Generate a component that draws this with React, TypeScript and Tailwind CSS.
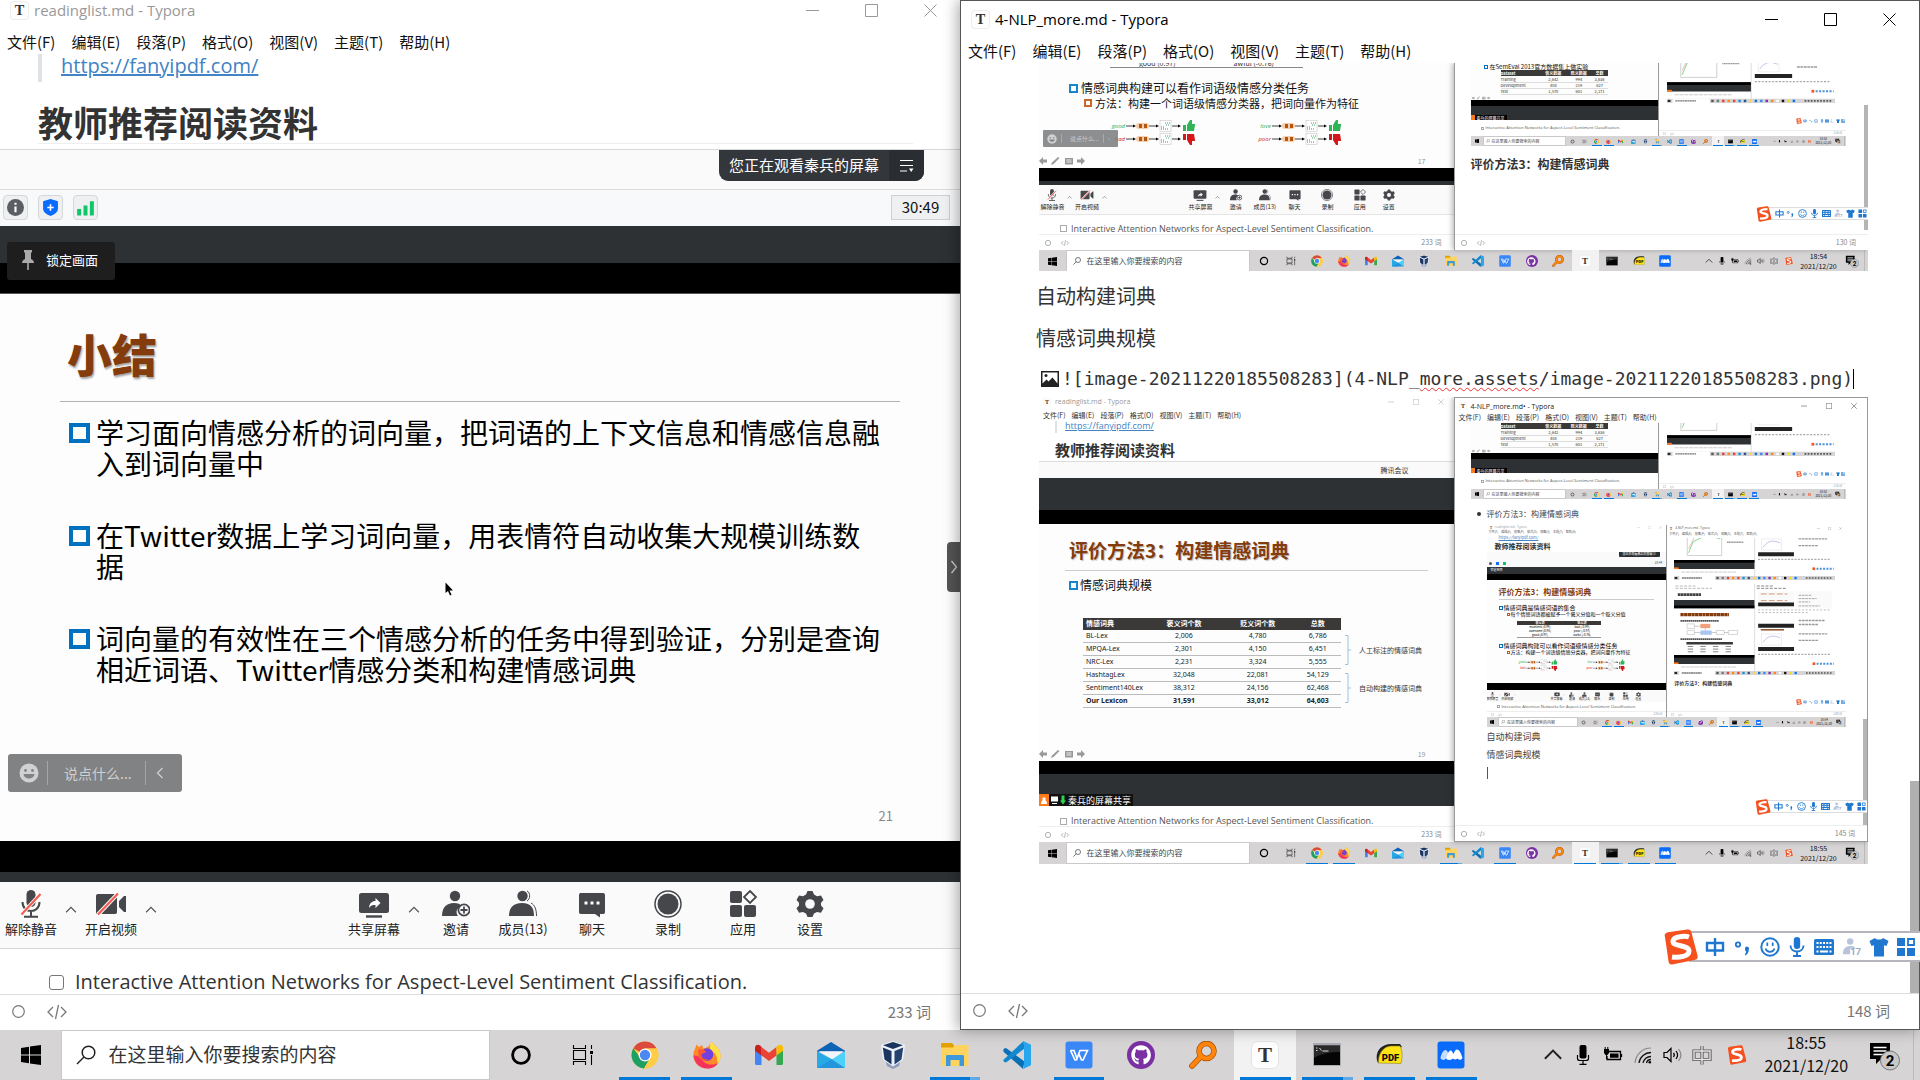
import React from "react";
import { FaGithub } from "react-icons/fa";

type Size = "lg" | "md" | "sm";

const svg = "block h-full w-full";

/* ---------- application logos ---------- */

const Windows = () => (
  <svg viewBox="0 0 20 20" className={svg}>
    <path d="M0 3l8-1.2v7.7H0zM9 1.6L20 0v9.5H9zM0 10.5h8v7.7L0 17zM9 10.5h11V20L9 18.4z" fill="#000" />
  </svg>
);
const Cortana = () => (
  <svg viewBox="0 0 28 28" className={svg}>
    <circle cx="14" cy="14" r="8.4" fill="none" stroke="#000" strokeWidth="2.8" />
  </svg>
);
const TaskView = () => (
  <svg viewBox="0 0 28 28" className={svg}>
    <path d="M4.500 4v3.500h12V4M4.500 24v-3.500h12V24M4.500 9.500h12v9h-12zM22.500 4v4M22.500 14v10" fill="none" stroke="#000" strokeWidth="1.100" />
    <rect x="21" y="10" width="3" height="3" fill="#000" />
  </svg>
);
const Chrome = () => (
  <svg viewBox="0 0 28 28" className={svg}>
    <circle cx="14" cy="14" r="13.500" fill="#ffcd46" />
    <path d="M14 14L2.300 7.200A13.500 13.500 0 0 1 25.700 7.500H14z" fill="#db4a3d" />
    <path d="M2.300 7.200A13.500 13.500 0 0 0 13 27.500l6-10.500-5-3-4.500 3z" fill="#1da061" />
    <path d="M14 7.500h11.700A13.500 13.500 0 0 1 13 27.500l6.500-11z" fill="#ffcd46" />
    <circle cx="14" cy="14" r="6.500" fill="#fff" />
    <circle cx="14" cy="14" r="5.200" fill="#4d88f2" />
  </svg>
);
const Firefox = () => (
  <svg viewBox="0 0 28 28" className={svg}>
    <path d="M18.500 0c1 3 3 3.500 5 5.500 5 5.500 5.500 12 1 17.500-5.500 6-15.500 6-21 0C-.5 18.500-.5 11.500 2 8l1.500-4.500L6 6l3-2 1.500 3.500c3-.5 7-2.500 8-7.500z" fill="#ff8a2a" />
    <path d="M18.500 0c1 3 3 3.500 5 5.500 5 5.500 5.500 12 1 17.500 0-7-1.500-11-7-14-1.500-3 0-6.500 1-9z" fill="#ffe04a" />
    <path d="M.5 15C2 23.500 8 27.500 14.500 27.500c4.500 0 8-1.500 10.500-5.500-4 2-10 2.500-14-1-3.500-3-6-8-10.500-6z" fill="#f5335f" />
    <circle cx="14" cy="13.500" r="6.300" fill="#7340dd" />
    <path d="M5 9c3-1.500 6-.5 8 1.500-1 2-4 1.500-4.500 3.500 0 3.500 4 5 7 4-4 3.500-9.500 1-10-3z" fill="#ff5a2f" />
  </svg>
);
const Gmail = () => (
  <svg viewBox="0 0 28 28" className={svg}>
    <path d="M0 7v15.500C0 23.800 1 24 2 24h4.500V11z" fill="#4285f4" />
    <path d="M28 7v15.500c0 1.300-1 1.500-2 1.500h-4.500V11z" fill="#34a853" />
    <path d="M6.500 6v8.500L14 20l7.500-5.500V6L14 11.800z" fill="#ea4335" />
    <path d="M0 7c0-3 3-4 5-2.500l1.500 1.200v8.800L0 9.700z" fill="#c5221f" />
    <path d="M28 7c0-3-3-4-5-2.500l-1.500 1.200v8.800L28 9.700z" fill="#fbbc04" />
  </svg>
);
const Mail = () => (
  <svg viewBox="0 0 30 28" className={svg}>
    <path d="M0 9.500L15 0l15 9.500v1H0z" fill="#0f63b4" />
    <path d="M2 10h26L17 19z" fill="#f3f6f9" />
    <path d="M0 10l16 8.500V28H0z" fill="#27a9e8" />
    <path d="M30 10L16 18.500 30 28z" fill="#4bd2fb" />
    <path d="M0 28l16-9.500L30 28z" fill="#2296dd" />
  </svg>
);
const VBox = () => (
  <svg viewBox="0 0 28 28" className={svg}>
    <path d="M6 18l8-2 8 2-2 7-6 3-6-3z" fill="#8f9dbb" />
    <path d="M14 0l12 4-2 15-10 6.500L4 19 2 4z" fill="#eef3fa" />
    <path d="M14 1l10 3.200L14 8 4 4.200z" fill="#1b355f" />
    <path d="M3.800 6.500L12.500 10v13.500L5.500 18.500z" fill="#1b355f" />
    <path d="M24.200 6.500L15.500 10v13.500l7-5z" fill="#24426f" />
  </svg>
);
const Folder = () => (
  <svg viewBox="0 0 28 28" className={svg}>
    <path d="M0 3.500C0 2.500.5 2 1.500 2H11l2 2.500V7H0z" fill="#e2a100" />
    <path d="M0 6.500h12l2-2.500h13.500v21H0z" fill="#ffd45e" />
    <path d="M5 25v-9.500c0-1 .5-1.500 1.500-1.500h15c1 0 1.500.5 1.500 1.500V25h-4.500v-6h-9v6z" fill="#3e98dc" />
  </svg>
);
const VSCode = () => (
  <svg viewBox="0 0 30 30" className={svg}>
    <path d="M2 7.500L4 8l19 14-1.500 8L.5 11.500V9z" fill="#0a6fb5" />
    <path d="M.5 20L22 0l1 8L4 22.500l-2 .5-1.500-1.500z" fill="#1289cf" />
    <path d="M21.500 0L30 4v22l-8.500 4 1-2V2z" fill="#29a7ee" />
  </svg>
);
const Wps = () => (
  <svg viewBox="0 0 28 28" className={svg}>
    <rect x=".5" y=".5" width="27" height="27" rx="3" fill="#3a88f8" />
    <path d="M5.500 9.500h3.500l3 8 3-8h7.500l-4.500 9.500h-1.500L13.500 12M5.500 9.500L10 19h1.500" fill="none" stroke="#fff" strokeWidth="1.700" />
  </svg>
);
const Github = () => (
  <div className="h-full w-full rounded-full bg-[#7a2fa2] p-[14%] text-white">
    <FaGithub className={svg} />
  </div>
);
const Everything = () => (
  <svg viewBox="0 0 28 28" className={svg}>
    <circle cx="17.500" cy="10" r="7.500" fill="none" stroke="#a85000" strokeWidth="5.600" />
    <path d="M11.500 16L3 25" stroke="#a85000" strokeWidth="5.600" strokeLinecap="round" />
    <circle cx="17.500" cy="10" r="7.500" fill="none" stroke="#ff850d" strokeWidth="4.200" />
    <path d="M11.500 16L3 25" stroke="#ff850d" strokeWidth="4.200" strokeLinecap="round" />
  </svg>
);
const Typora = () => (
  <svg viewBox="0 0 28 28" className={svg}>
    <rect x=".5" y=".5" width="27" height="27" rx="6" fill="#fdfdfd" stroke="#e2e2e2" />
    <text x="14" y="21" textAnchor="middle" fontSize="21" fontWeight="700" fill="#333" className="font-['Liberation_Serif',serif]">
      T
    </text>
  </svg>
);
const Cmd = () => (
  <svg viewBox="0 0 28 28" className={svg}>
    <path d="M0 2h28v23H0z" fill="#a9acb0" />
    <path d="M1 4.500h26V24H1z" fill="#050505" />
    <path d="M1 17C9 12 18 11 27 11V4.500H1z" fill="#3a3a3a" opacity=".7" />
    <path d="M3 7h1.500M3 9.500h1.500M6.500 7l2 2.500M9.500 10h6" stroke="#ddd" strokeWidth="1" />
  </svg>
);
const Pdf = () => (
  <svg viewBox="0 0 28 28" className={svg}>
    <path d="M3 22C-1 14 4 3 16 3h9l2 3-14 3z" fill="#222" />
    <path d="M3.500 22C3 13 8 5.500 16 5h9c2.500 5 2.500 11 1 17.500z" fill="#ffe312" stroke="#8a8220" strokeWidth=".6" />
    <text x="15.500" y="19.500" textAnchor="middle" fontSize="9.500" fontWeight="900" fill="#111" className="font-['Roboto',sans-serif]">
      PDF
    </text>
  </svg>
);
const Meeting = () => (
  <svg viewBox="0 0 28 28" className={svg}>
    <rect x=".5" y=".5" width="27" height="27" rx="3" fill="#0a6cfb" />
    <path d="M3.500 17c1-5 3-8 5-8 2 0 3 4 4.500 8-1 2.500-3 2-4 .500-1.500 2-4.500 2-5.500-.500z" fill="#c7dcff" />
    <path d="M9.500 17c1-5 2.500-7.500 4-7.500 1.500 0 2 2 3 3.500 1-2.500 2-4.500 3.500-4.500 2.500 0 4.500 5 5.500 8.500-1.500 2.500-3.500 2-5 .500-2 1.500-3.500 1-4.500 0-2 2-5 2-6.500-.500z" fill="#fff" />
  </svg>
);
const Sogou = () => (
  <svg viewBox="0 0 36 36" className={svg}>
    <path d="M2 8C1 5 3 3.800 5 3.300L24 .6c3-.5 4 .5 4.500 3l6 23c.6 3-.5 4-3 4.500L10 35.300c-3 .6-4-.4-4.500-3z" fill="#f4511e" />
    <path d="M26 8c-4-1.500-16-.5-16 4.500 0 5.500 16 3 16 9.500 0 5.500-10 7-17 6" fill="none" stroke="#fff" strokeWidth="5" />
  </svg>
);

/* ---------- tray and input-method glyphs ---------- */

const ChevronUp = ({ color = "#222" }: { color?: string }) => (
  <svg viewBox="0 0 16 16" className={svg}>
    <path d="M1.500 11L8 4.500l6.500 6.500" fill="none" stroke={color} strokeWidth="1.600" />
  </svg>
);
const TrayMic = () => (
  <svg viewBox="0 0 20 20" className={svg}>
    <rect x="6.500" y="0" width="7" height="13.500" rx="2" />
    <path d="M4.500 10v3.500c0 1.500 1 2 2.500 2h6c1.500 0 2.500-.5 2.500-2V10M10 16v3M6.500 19.400h7" fill="none" stroke="#000" strokeWidth="1.200" />
  </svg>
);
const Battery = () => (
  <svg viewBox="0 0 20 20" className={svg}>
    <path d="M5 6.500h12.500v8H4V11M18.500 9v3" fill="none" stroke="#000" strokeWidth="1.300" />
    <path d="M7 8.500h8.500v4.200H7zM1 4h5v4L4.500 10h-2L1 8z" />
    <path d="M2.200 2v2M4.800 2v2M3.500 10v4" stroke="#000" strokeWidth="1" />
  </svg>
);
const Wifi = () => (
  <svg viewBox="0 0 20 20" className={svg}>
    <path d="M2 18A16 16 0 0 1 18 3" fill="none" stroke="#888" strokeWidth="1.200" />
    <path d="M6 18A12 12 0 0 1 18 7.500M10 18a8 8 0 0 1 8-6.500M13.500 18a4.500 4.500 0 0 1 4.500-3.500" fill="none" stroke="#111" strokeWidth="1.300" />
    <circle cx="16.800" cy="17.300" r="1.300" />
  </svg>
);
const Sound = () => (
  <svg viewBox="0 0 20 20" className={svg}>
    <path d="M1 7.500h3L8 3.500v13l-4-4H1z" fill="none" stroke="#000" strokeWidth="1.200" />
    <path d="M10.500 8c1 1.200 1 2.800 0 4M13 6c2 2.500 2 5.500 0 8" fill="none" stroke="#000" strokeWidth="1.200" />
    <path d="M15.500 4c3.200 4 3.200 8 0 12" fill="none" stroke="#888" strokeWidth="1.200" />
  </svg>
);
const Zhong = () => (
  <svg viewBox="0 0 20 20" className={svg}>
    <path d="M2 6h16v7.500H2zM10 1v18" fill="none" stroke="#1f77cf" strokeWidth="2.400" />
  </svg>
);
const TrayZhong = () => (
  <svg viewBox="0 0 20 20" className={svg}>
    <path d="M2 6h16v8.500H2zM10 1v18.500" fill="none" stroke="#555" strokeWidth="3.200" />
    <path d="M2 6h16v8.500H2zM10 1v18.500" fill="none" stroke="#e8e6e6" strokeWidth="1.400" />
  </svg>
);
const Notification = () => (
  <svg viewBox="0 0 32 32" className={svg}>
    <path d="M2 4h20v16h-9l-5 5v-5H2z" />
    <path d="M5.500 8.500h13M5.500 12h13M5.500 15.500h13" stroke="#fff" strokeWidth="1.500" />
    <circle cx="22" cy="21.500" r="9.500" fill="#c9c8c8" stroke="#777" />
    <text x="22" y="27" textAnchor="middle" fontSize="15" fontWeight="700" className="font-['Roboto',sans-serif]">
      2
    </text>
  </svg>
);
const Punct = () => (
  <svg viewBox="0 0 20 20" className={svg}>
    <circle cx="5" cy="7.500" r="2.200" fill="none" stroke="#1f77cf" strokeWidth="1.800" />
    <path d="M12 11.500a2 2 0 1 1 3.800 1c0 2.500-1 4.500-3.300 6l-.8-1c1-1 1.500-2 1.500-3-.8 0-1.200-1-1.200-3z" fill="#1f77cf" />
  </svg>
);
const Smile = () => (
  <svg viewBox="0 0 20 20" className={svg}>
    <circle cx="10" cy="10" r="8.700" fill="none" stroke="#1f77cf" strokeWidth="2" />
    <path d="M7.300 5.500v3.500M12.700 5.500v3.500M5.500 11.500c1.500 4.500 7.500 4.500 9 0" fill="none" stroke="#1f77cf" strokeWidth="1.700" />
  </svg>
);
const ImeMic = () => (
  <svg viewBox="0 0 20 20" className={svg}>
    <rect x="6.800" y="0" width="6.400" height="12" rx="3.200" fill="#1f77cf" />
    <path d="M3.500 8.500c0 8 13 8 13 0M10 14.500V19M6 19h8" fill="none" stroke="#1f77cf" strokeWidth="1.900" />
  </svg>
);
const Keyboard = () => (
  <svg viewBox="0 0 20 20" className={svg}>
    <rect x="0" y="2" width="20" height="16" rx="1.500" fill="#1f77cf" />
    <path d="M2.500 6h15M2.500 10h15" stroke="#fff" strokeWidth="2.200" strokeDasharray="2 1.250" />
    <path d="M2.500 14.500h2M6 14.500h8M15.500 14.500h2" stroke="#fff" strokeWidth="2" />
  </svg>
);
const Person17 = () => (
  <svg viewBox="0 0 22 20" className={svg}>
    <circle cx="9" cy="4" r="3.500" fill="#b9c4dc" />
    <path d="M1 18c0-6 3-9 8-9s5 1 6 3H9v6z" fill="#b9c4dc" />
    <text x="15" y="19" textAnchor="middle" fontSize="10" fontWeight="700" fill="#9aa8c6" className="font-['Roboto',sans-serif]">
      17
    </text>
  </svg>
);
const Shirt = () => (
  <svg viewBox="0 0 20 20" className={svg}>
    <path d="M6 1c1 2 7 2 8 0l5.500 3-2 5-2.500-.8V19.500H5V8.200L2.500 9 .5 4z" fill="#1f77cf" />
  </svg>
);
const GridIcon = () => (
  <svg viewBox="0 0 20 20" className={svg}>
    <path d="M1 1h8v8H1zM1 11h8v8H1zM11 11h8v8h-8z" fill="#1f77cf" />
    <path d="M12 2h6v6h-6z" fill="none" stroke="#1f77cf" strokeWidth="1.800" />
  </svg>
);

/* ---------- meeting glyphs ---------- */

const ink = "#45474b";
const MicOff = () => (
  <svg viewBox="0 0 28 28" className={svg}>
    <rect x="9.500" y="0" width="9" height="17" rx="4.500" fill={ink} />
    <path d="M5.500 12c0 12 17 12 17 0M14 21v5M7 26.800h14" fill="none" stroke={ink} strokeWidth="2" />
    <path d="M4.500 24.500L23.500 4" stroke="#fff" strokeWidth="4" />
    <path d="M4.500 24.500L23.500 4" stroke="#f25c54" strokeWidth="2.200" />
  </svg>
);
const CamOff = () => (
  <svg viewBox="0 0 32 28" className={svg}>
    <path d="M1 6c0-1 .5-2 2-2h17c1.500 0 2 1 2 2v16c0 1-.5 2-2 2H3c-1.500 0-2-1-2-2zM24 11l5-5h2v16h-2l-5-5z" fill={ink} />
    <path d="M3 24.500L23 3.500" stroke="#fff" strokeWidth="4" />
    <path d="M3 24.500L23 3.500" stroke="#f25c54" strokeWidth="2.200" />
  </svg>
);
const Share = () => (
  <svg viewBox="0 0 32 28" className={svg}>
    <rect x="1" y="3" width="30" height="20" rx="2.500" fill={ink} />
    <path d="M8 26.500h16" stroke={ink} strokeWidth="2.400" />
    <path d="M11 18c.5-5 3-7 6.500-7V8l5 5-5 5v-3c-3 0-5 .5-6.500 3z" fill="#fff" />
  </svg>
);
const Invite = () => (
  <svg viewBox="0 0 28 28" className={svg}>
    <circle cx="13" cy="6" r="5.200" fill={ink} />
    <path d="M0 26c0-8 4-13 12-13 4 0 6 1 8 3-5 1-7 6-4 10z" fill={ink} />
    <circle cx="22" cy="20" r="5.600" fill="#fafafa" stroke={ink} strokeWidth="1.800" />
    <path d="M22 16.500v7M18.500 20h7" stroke={ink} strokeWidth="1.800" />
  </svg>
);
const Members = () => (
  <svg viewBox="0 0 28 28" className={svg}>
    <circle cx="13.500" cy="6" r="5.200" fill={ink} />
    <path d="M0 26c0-8 4-13 13-13s12 5 12 13z" fill={ink} />
    <path d="M18 1c3.500 1.500 3.500 8 0 10M22 13c4 2 5.500 7 5.500 13" fill="none" stroke={ink} strokeWidth="1" />
  </svg>
);
const Chat = () => (
  <svg viewBox="0 0 28 28" className={svg}>
    <path d="M1 5c0-1.500 1-2 2-2h22c1.500 0 2 1 2 2v17c0 1.500-1 2-2 2h-3v3.500L17 24H3c-1.500 0-2-1-2-2z" fill={ink} />
    <path d="M6.500 11.500h3v3h-3zM12.500 11.500h3v3h-3zM18.500 11.500h3v3h-3z" fill="#fff" />
  </svg>
);
const RecordIcon = () => (
  <svg viewBox="0 0 28 28" className={svg}>
    <circle cx="14" cy="14" r="13" fill="none" stroke={ink} strokeWidth="1.500" />
    <circle cx="14" cy="14" r="10.500" fill={ink} />
  </svg>
);
const Apps = () => (
  <svg viewBox="0 0 28 28" className={svg}>
    <rect x="1" y="1" width="12" height="12" rx="2" fill={ink} />
    <rect x="1" y="15" width="12" height="12" rx="2" fill={ink} />
    <rect x="15" y="15" width="12" height="12" rx="2" fill={ink} />
    <path d="M21 1l6 6-6 6-6-6z" fill="none" stroke={ink} strokeWidth="1.800" />
  </svg>
);
const Gear = () => (
  <svg viewBox="0 0 28 28" className={svg}>
    <path d="M10 4.500L11.500 1h5L18 4.500l3 1.800 4-.8 2.500 4.500-2.500 2.800v2.600l2.500 2.800-2.500 4.500-4-.8-3 1.700-1.500 3.400h-5L10 23.600l-3-1.700-4 .8L.5 18.200 3 15.400v-2.600L.5 10 3 5.500l4 .8z" fill={ink} />
    <circle cx="14" cy="14" r="4.800" fill="#fafafa" />
  </svg>
);
const Grin = () => (
  <svg viewBox="0 0 20 20" className={svg}>
    <circle cx="10" cy="10" r="9.500" fill="#d0d1d2" />
    <circle cx="6.500" cy="7.500" r="1.400" fill="#808284" />
    <circle cx="13.500" cy="7.500" r="1.400" fill="#808284" />
    <path d="M4.500 11h11c-.5 6-10.500 6-11 0z" fill="#808284" />
  </svg>
);

/* ---------- shared bars ---------- */

const apps: { name: string; icon: React.ReactNode; open?: boolean; active?: boolean; stacked?: boolean }[] = [
  { name: "Cortana", icon: <Cortana /> },
  { name: "任务视图", icon: <TaskView /> },
  { name: "Chrome", icon: <Chrome />, open: true },
  { name: "Firefox", icon: <Firefox />, open: true },
  { name: "Gmail", icon: <Gmail /> },
  { name: "邮件", icon: <Mail /> },
  { name: "VirtualBox", icon: <VBox /> },
  { name: "文件资源管理器", icon: <Folder />, open: true, stacked: true },
  { name: "VS Code", icon: <VSCode /> },
  { name: "WPS", icon: <Wps />, open: true },
  { name: "GitHub", icon: <Github /> },
  { name: "Everything", icon: <Everything /> },
  { name: "Typora", icon: <Typora />, open: true, active: true },
  { name: "命令提示符", icon: <Cmd />, open: true, stacked: true },
  { name: "PDF", icon: <Pdf />, open: true },
  { name: "腾讯会议", icon: <Meeting />, open: true },
];

const bar = {
  lg: { h: "h-[50px]", start: "size-5", find: "h-5 w-5 ml-3.5", text: "text-[19px] ml-3", icon: "size-7", line: "h-[3px]", tray: "size-5", logo: "size-5", clock: "text-[16px] leading-[23px] pb-0.5", bell: "size-8" },
  md: { h: "h-[22px]", start: "size-[9px]", find: "h-2 w-2 ml-1.5", text: "text-[8px] ml-1.5", icon: "size-3", line: "h-px", tray: "size-2", logo: "size-2", clock: "text-[7px] leading-[10px]", bell: "size-3.5" },
  sm: { h: "h-[10px]", start: "size-1", find: "h-1 w-1 ml-0.5", text: "text-[4px] ml-0.5", icon: "size-[5px]", line: "h-px", tray: "size-[3px]", logo: "size-[3px]", clock: "text-[3px] leading-[4px]", bell: "size-1.5" },
};

function Taskbar({ size, time, date = "2021/12/20" }: { size: Size; time: string; date?: string }) {
  const b = bar[size];
  return (
    <footer className={`flex w-full shrink-0 overflow-hidden bg-[#d6d4d5] text-[#111] ${b.h}`}>
      <button aria-label="开始" className="flex w-[3.2%] items-center justify-center">
        <span className={b.start}>
          <Windows />
        </span>
      </button>
      <label className="flex w-[22.3%] items-center border border-[#c9c9c9] bg-white">
        <span className={`shrink-0 ${b.find}`}>
          <svg viewBox="0 0 20 20" className={svg}>
            <circle cx="12.500" cy="7.500" r="6.300" fill="none" stroke="#222" strokeWidth="1.500" />
            <path d="M8 12l-7 7" stroke="#222" strokeWidth="1.500" />
          </svg>
        </span>
        {size === "lg" ? (
          <input aria-label="搜索" placeholder="在这里输入你要搜索的内容" className={`min-w-0 flex-1 bg-transparent pb-0.5 outline-none placeholder:text-[#333] ${b.text}`} />
        ) : (
          <span className={`whitespace-nowrap leading-none text-[#444] ${b.text}`}>在这里输入你要搜索的内容</span>
        )}
      </label>
      <nav className="flex w-[51.7%]">
        {apps.map((a) => (
          <button key={a.name} aria-label={a.name} className={`relative flex flex-1 items-center justify-center ${a.active ? "bg-[#f3f2f2]" : ""}`}>
            <span className={b.icon}>{a.icon}</span>
            {a.open && <span className={`absolute bottom-0 left-[9%] right-[9%] bg-[#0078d7] ${b.line}`} />}
            {a.stacked && <span className={`absolute bottom-0 right-[9%] w-[16%] bg-[#5fa9e6] ${b.line}`} />}
          </button>
        ))}
      </nav>
      <div className="ml-auto flex w-[19.9%] items-stretch">
        {[<ChevronUp />, <TrayMic />, <Battery />, <Wifi />, <Sound />, <TrayZhong />].map((icon, i) => (
          <span key={i} className="flex flex-[30] items-center justify-center">
            <span className={b.tray}>{icon}</span>
          </span>
        ))}
        <span className="flex flex-[40] items-center justify-center">
          <span className={b.logo}>
            <Sogou />
          </span>
        </span>
        <span className={`flex w-0 flex-[98] flex-col items-center justify-center whitespace-nowrap ${b.clock}`}>
          <span>{time}</span>
          <span>{date}</span>
        </span>
        <span className="flex flex-[58] items-center justify-center">
          <span className={`shrink-0 ${b.bell}`}>
            <Notification />
          </span>
        </span>
        <span className="flex-[6] border-l border-[#bbb]" />
      </div>
    </footer>
  );
}

const menuItems = ["文件(F)", "编辑(E)", "段落(P)", "格式(O)", "视图(V)", "主题(T)", "帮助(H)"];
const menu = {
  lg: "gap-4 pl-[7px] h-[22px] pb-[3px] text-[15px] text-[#111]",
  md: "gap-[6px] px-1 h-[9px] pb-0.5 text-[7px] text-[#333]",
  sm: "gap-[3px] px-0.5 h-1 text-[3px] text-[#555]",
};
function Menu({ size }: { size: Size }) {
  return (
    <nav className={`flex shrink-0 items-center whitespace-nowrap leading-none ${menu[size]}`}>
      {menuItems.map((m) => (
        <button key={m}>{m}</button>
      ))}
    </nav>
  );
}

const title = {
  lg: { box: "pl-2.5 text-[15px]", icon: "size-[19px] mr-[5px]", ctl: "gap-[46px] pr-[23px]", g: "size-[13px]" },
  md: { box: "pl-1 text-[7px]", icon: "size-2 mr-1", ctl: "gap-[19px] pr-2.5", g: "size-1.5" },
  sm: { box: "pl-0.5 text-[3px]", icon: "size-1 mr-0.5", ctl: "gap-2 pr-1", g: "size-[3px]" },
};
function TitleBar({ size, text, className }: { size: Size; text: string; className: string }) {
  const t = title[size];
  return (
    <header className={`flex shrink-0 items-center ${t.box} ${className}`}>
      <span className={t.icon}>
        <Typora />
      </span>
      <span className={`flex-1 whitespace-nowrap leading-none ${openSans}`}>{text}</span>
      <span className={`flex items-center ${t.ctl}`}>
        {["M0 6.500h13", "M.5 .5h12v12H.5z", "M.5 .5l12 12M12.500 .5l-12 12"].map((d, i) => (
          <button key={d} aria-label={["最小化", "最大化", "关闭"][i]} className={t.g}>
            <svg viewBox="0 0 13 13" className={svg}>
              <path d={d} fill="none" stroke="currentColor" />
            </svg>
          </button>
        ))}
      </span>
    </header>
  );
}

const status = {
  lg: { box: "h-9 border-t border-[#ddd] pb-0.5 pl-3 pr-[29px] text-[15px] text-[#777]", a: "size-[13px]", b: "ml-[22px] h-4 w-5" },
  md: { box: "h-4 border-t border-[#eee] pl-1.5 pr-3 text-[7px] text-[#888]", a: "size-1.5", b: "ml-2.5 size-2" },
  sm: { box: "h-1.5 border-t border-[#eee] pl-1 pr-1 text-[3px] text-[#999]", a: "size-[3px]", b: "ml-1 size-1" },
};
function StatusBar({ size, words }: { size: Size; words: string }) {
  const s = status[size];
  return (
    <div className={`flex shrink-0 items-center bg-white leading-none ${s.box}`}>
      <span className={s.a}>
        <svg viewBox="0 0 13 13" className={svg}>
          <circle cx="6.500" cy="6.500" r="5.800" fill="none" stroke="#777" strokeWidth="1.200" />
        </svg>
      </span>
      <span className={s.b}>
        <svg viewBox="0 0 20 16" className={svg}>
          <path d="M6 3L1 8l5 5M14 3l5 5-5 5M11.500 1l-3 14" fill="none" stroke="#777" strokeWidth="1.300" />
        </svg>
      </span>
      <span className="ml-auto whitespace-nowrap">{words} 词</span>
    </div>
  );
}

const ime = {
  lg: { box: "h-[31px] w-[257px]", logo: "size-9 -my-1", icon: "size-5", edge: "border-y-2 border-[#b5b5bd]" },
  md: { box: "h-[13px] w-[112px]", logo: "size-4 -my-0.5", icon: "size-[9px]", edge: "border-y border-[#ddd]" },
  sm: { box: "h-1.5 w-[50px]", logo: "size-1.5", icon: "size-1", edge: "" },
};
function ImeBar({ size, className }: { size: Size; className: string }) {
  const m = ime[size];
  return (
    <div className={`absolute z-10 flex items-center ${m.box} ${className}`}>
      <span className={`relative z-10 shrink-0 ${m.logo}`}>
        <Sogou />
      </span>
      <div className={`-ml-[4%] flex h-full flex-1 items-center justify-around bg-white pl-[5%] ${m.edge}`}>
        {[<Zhong />, <Punct />, <Smile />, <ImeMic />, <Keyboard />, <Person17 />, <Shirt />, <GridIcon />].map((icon, i) => (
          <span key={i} className={m.icon}>
            {icon}
          </span>
        ))}
      </div>
    </div>
  );
}

const tools = {
  lg: { box: "h-[66px] pt-2 text-[13px]", icon: "size-7", wide: "h-7 w-8", label: "mt-[3px] leading-[15px]", chev: "size-3 mt-3.5" },
  md: { box: "h-[29px] pt-1 text-[6px]", icon: "size-3", wide: "h-3 w-[14px]", label: "mt-0.5 leading-[7px]", chev: "size-[5px] mt-1.5" },
  sm: { box: "h-[12px] pt-0.5 text-[3px]", icon: "size-[5px]", wide: "h-[5px] w-1.5", label: "leading-[4px]", chev: "size-0.5 mt-0.5" },
};
function MeetingTools({ size }: { size: Size }) {
  const t = tools[size];
  const tool = (cell: string, label: string, icon: React.ReactNode, wide = false) => (
    <button className={`flex w-0 flex-col items-center whitespace-nowrap ${cell}`}>
      <span className={`shrink-0 ${wide ? t.wide : t.icon}`}>{icon}</span>
      <span className={t.label}>{label}</span>
    </button>
  );
  const chev = (name: string) => (
    <button aria-label={name} className="flex w-0 flex-[18] justify-center">
      <span className={`shrink-0 ${t.chev}`}>
        <ChevronUp color="#555" />
      </span>
    </button>
  );
  return (
    <div className={`flex shrink-0 items-start bg-[#fafafa] text-[#222] ${t.box}`}>
      {tool("flex-[62]", "解除静音", <MicOff />)}
      {chev("音频选项")}
      {tool("flex-[62]", "开启视频", <CamOff />, true)}
      {chev("视频选项")}
      <span className="flex-[183]" />
      {tool("flex-[62]", "共享屏幕", <Share />, true)}
      {chev("共享选项")}
      {tool("flex-[66]", "邀请", <Invite />)}
      {tool("flex-[68]", "成员(13)", <Members />)}
      {tool("flex-[70]", "聊天", <Chat />)}
      {tool("flex-[82]", "录制", <RecordIcon />)}
      {tool("flex-[68]", "应用", <Apps />)}
      {tool("flex-[66]", "设置", <Gear />)}
      <span className="flex-[117]" />
    </div>
  );
}

const paper = "Interactive Attention Networks for Aspect-Level Sentiment Classification.";
const openSans = "font-['Open_Sans','Noto_Sans_CJK_SC',sans-serif]";

function MiniTask({ className, box }: { className: string; box: string }) {
  return (
    <div className={`flex shrink-0 items-center overflow-hidden whitespace-nowrap bg-white text-[#555] ${openSans} ${className}`}>
      <span className={`shrink-0 border border-[#aaa] ${box}`} />
      {paper}
    </div>
  );
}

const SlideTools = ({ className }: { className: string }) => (
  <svg viewBox="0 0 46 10" className={className}>
    <path d="M0 5l4-4v2.500h4v3H4V9zM46 5l-4-4v2.500h-4v3h4V9zM12 9l1-2.500L19 1l1.500 1-6 6z" fill="#999" />
    <path d="M26 2h8v6.500h-8z" fill="#999" />
    <path d="M27.500 4h5M27.500 6h5" stroke="#fff" strokeWidth=".8" />
  </svg>
);

/* Smallest thumbnails: a desktop reduced to blocks of colour. */
const dots = ["#555", "#777", "#db4437", "#ff8a16", "#ea4335", "#1b8fdc", "#2c5286", "#fcd462", "#1479bd", "#3d86f6", "#7a30a4", "#ff8811", "#fff", "#111", "#f8dd17", "#0a72fb"];
const Desk = ({ chart = false, className }: { chart?: boolean; className: string }) => (
  <svg viewBox="0 0 486 274" preserveAspectRatio="xMidYMax slice" className={className}>
    <path d="M0 0h486v274H0z" fill="#fff" />
    <path d="M5 6h60M5 13h110" stroke="#bbb" strokeWidth="3" strokeDasharray="9 4" />
    <path d="M12 32h70" stroke="#444" strokeWidth="9" strokeDasharray="8 1" />
    <path d="M0 48h243v25H0zM0 214h243v27H0z" fill="#2d3134" />
    <path d="M0 65h243v8H0zM0 214h243v8H0z" fill="#000" />
    <path d="M0 236h14v5H0z" fill="#ff7a1a" />
    <path d="M20 92h146" stroke="#843c0c" strokeWidth="10" strokeDasharray="10 1" />
    <path d="M20 111h116" stroke="#555" strokeWidth="5" strokeDasharray="5 1" />
    {chart ? (
      <g fill="none">
        <path d="M40 115v85h104v-85z" stroke="#bbb" strokeWidth="2" />
        <path d="M44 180l20-40 25-14 30-2 20 10" stroke="#f29a9a" strokeWidth="2" />
        <path d="M44 192l14-34 26-12 30-4 26 8" stroke="#6fd07f" strokeWidth="2.500" />
        <path d="M160 142h60M160 160h50" stroke="#999" strokeWidth="4" strokeDasharray="4 1" />
      </g>
    ) : (
      <g>
        <path d="M40 120h22v14H40zM40 140h22v12H40zM128 140h24v12h-24zM164 140h28v12h-28z" fill="#fff" stroke="#888" />
        <path d="M80 120h30v13H80z" fill="#f1a07a" />
        <path d="M80 140h34v13H80z" fill="#a9c6f0" />
        <path d="M62 127h18M62 146h18M114 146h14M152 146h12M95 133v7" stroke="#666" />
        <path d="M20 166h126" stroke="#555" strokeWidth="5" strokeDasharray="5 1" />
        <path d="M38 175h140v7H38z" fill="#3b3838" />
        <path d="M42 188h130M42 196h130M42 204h130" stroke="#888" strokeWidth="3" strokeDasharray="16 22" />
      </g>
    )}
    <path d="M22 250h165" stroke="#ccc" strokeWidth="3" strokeDasharray="12 2" />
    <path d="M243.500 0v262" stroke="#999" />
    <path d="M250 6h50M250 13h90" stroke="#888" strokeWidth="3" strokeDasharray="9 4" />
    <path d="M254 22h108v50H254zM368 22h108v50H368z" fill="#fafafa" />
    <path d="M262 30h80M262 50h80" stroke="#cf9a7c" strokeWidth="3" strokeDasharray="18 6" />
    <path d="M254 56h108v11H254zM254 120h108v12H254zM254 190h108v12H254z" fill="#222" />
    <path d="M376 34h40M376 44h54M376 54h34M376 66h64" stroke="#aaa" strokeWidth="3" strokeDasharray="8 2" />
    <path d="M254 78h220M254 86h150" stroke="#bbb" strokeWidth="3" strokeDasharray="6 5" />
    <path d="M262 138h70" stroke="#843c0c" strokeWidth="4" />
    <path d="M264 150h60v34h-60z" fill="none" stroke="#ccc" />
    <path d="M268 176c14-20 30-24 52-14" fill="none" stroke="#b79be0" strokeWidth="2" />
    <path d="M376 110h80M376 122h60M376 150h86M376 170h60" stroke="#999" strokeWidth="4" strokeDasharray="8 2" />
    <path d="M254 212h220" stroke="#aaa" strokeWidth="4" strokeDasharray="6 4" />
    <path d="M418 240h8" stroke="#f4511e" strokeWidth="8" />
    <path d="M430 240h52" stroke="#4b93dd" strokeWidth="6" strokeDasharray="6 4" />
    <path d="M0 262h486v12H0z" fill="#d6d4d5" />
    <path d="M16 262h108v12H16z" fill="#fff" />
    <path d="M2 265h8v6H2z" fill="#222" />
    <path d="M24 268h60" stroke="#777" strokeWidth="4" strokeDasharray="6 1" />
    {dots.map((c, i) => (
      <rect key={i} x={128 + i * 15.7} y="264.500" width="7" height="7" fill={c} />
    ))}
    <path d="M398 268h80" stroke="#555" strokeWidth="5" strokeDasharray="5 4" />
  </svg>
);

/* ---------- second-level pictures inside the embedded captures ---------- */

function TinyDataset({ heading = false }: { heading?: boolean }) {
  return (
    <figure className="flex flex-col">
      <div className="flex">
        <div className="flex w-1/2 flex-col bg-[#fdfdfd]">
          {heading && (
            <div className="ml-[13px] flex h-[7px] items-center gap-0.5 whitespace-nowrap text-[6px] leading-[6px] text-[#111]">
              <span className="size-1 border border-[#0070c0]" />在SemEval 2013官方数据集上做实验
            </div>
          )}
          <table className="ml-[30px] w-[57%] text-[4px] leading-[6px] text-[#333]">
            <thead className="bg-[#3b3838] text-white">
              <tr>
                <th className="text-left">Dataset</th>
                <th>褒义数据</th>
                <th>贬义数据</th>
                <th>总数</th>
              </tr>
            </thead>
            <tbody className="text-center">
              {[["Training", "2,642", "994", "3,636"], ["Development", "408", "219", "627"], ["Test", "1,570", "601", "2,171"]].map((r) => (
                <tr key={r[0]} className="shadow-[0_1px_0_#ddd]">
                  {r.map((c, i) => (
                    <td key={i} className={i ? "" : "text-left"}>
                      {c}
                    </td>
                  ))}
                </tr>
              ))}
            </tbody>
          </table>
          <div className="mt-0.5 flex h-1 items-center">
            <SlideTools className="h-1 w-5" />
          </div>
          <div className="h-1.5 bg-black" />
          <div className="flex h-3.5 items-end bg-[#2d3134]">
            <span className="flex h-[5px] items-center bg-black pr-0.5 text-[4px] leading-none text-white">
              <span className="mr-0.5 h-full w-1 bg-[#ff7a1a]" />
              秦兵的屏幕共享
            </span>
          </div>
          <MiniTask className="h-4 pl-2.5 text-[4px] leading-[6px]" box="mr-0.5 size-[3px]" />
        </div>
        <div className="relative flex w-1/2 flex-col border-l border-[#999] bg-white">
          <Desk chart className={heading ? "ml-2 h-10 w-[168px]" : "ml-2 h-[33px] w-[168px]"} />
          <ImeBar size="sm" className="bottom-3 right-0" />
          <div className="mt-auto">
            <StatusBar size="sm" words="116" />
          </div>
        </div>
      </div>
      <Taskbar size="sm" time="18:52" />
    </figure>
  );
}

function TinyLexicon() {
  return (
    <figure className="flex flex-col overflow-hidden bg-white">
      <div className="flex h-[192px]">
        <div className="flex w-1/2 flex-col">
          <TitleBar size="sm" text="readinglist.md - Typora" className="h-[5px] text-[#999]" />
          <Menu size="sm" />
          <a href="https://fanyipdf.com/" className="ml-3 text-[4px] leading-[6px] text-[#4183c4] underline">
            https://fanyipdf.com/
          </a>
          <div className="ml-2 text-[7px] font-bold leading-[12px] text-[#333]">教师推荐阅读资料</div>
          <div className="flex h-2 justify-end bg-[#fafafa] pr-1.5">
            <span className="h-[5px] rounded-b-[1px] bg-[#2d3134] px-1 text-[3px] leading-[5px] text-white">您正在观看秦兵的屏幕 ☰</span>
          </div>
          <div className="flex h-[7px] items-center gap-1 bg-[#f7f9fb] pl-0.5 text-[3px] text-[#444]">
            <span className="size-[3px] rounded-full bg-[#555]" />
            <span className="size-[3px] bg-[#0a72fb]" />
            <span className="size-[3px] bg-[#0fc26b]" />
            <span className="ml-auto pr-1">28:44</span>
          </div>
          <div className="h-[7px] bg-[#2d3134] pl-1 text-[3px] leading-[7px] text-white">锁定画面</div>
          <div className="h-[6px] bg-black" />
          <div className="flex flex-1 flex-col bg-[#fdfdfd] pl-3 pt-1">
            <div className="w-[155px] border-b border-[#ccc] text-[8px] font-bold leading-[15px] text-[#843c0c]">评价方法3：构建情感词典</div>
            <div className="mt-1 flex items-center gap-px text-[6px] leading-[7px]">
              <span className="size-1 border border-[#0070c0]" />情感词典是情感词语的集合
            </div>
            <div className="ml-2 flex items-center gap-px text-[5px] leading-[6px]">
              <span className="size-[3px] border border-[#c55a11]" />每个情感词语都被赋予一个褒义分值和一个贬义分值
            </div>
            <table className="ml-[18px] mt-1 w-[84px] border-b border-[#999] text-center text-[3px] leading-[4px]">
              <thead className="bg-[#3b3838] text-white">
                <tr>
                  <th>褒义词</th>
                  <th>贬义词</th>
                </tr>
              </thead>
              <tbody>
                <tr>
                  <td>excellent (0.99)</td>
                  <td>bad (-0.99)</td>
                </tr>
                <tr>
                  <td>awesome (0.98)</td>
                  <td>poor (-0.97)</td>
                </tr>
                <tr>
                  <td>good (0.97)</td>
                  <td>awful (-0.76)</td>
                </tr>
              </tbody>
            </table>
            <div className="mt-1 flex items-center gap-px whitespace-nowrap text-[6px] leading-[7px]">
              <span className="size-1 border border-[#0070c0]" />情感词典构建可以看作词语级情感分类任务
            </div>
            <div className="ml-2 flex items-center gap-px whitespace-nowrap text-[5px] leading-[6px]">
              <span className="size-[3px] border border-[#c55a11]" />方法：构建一个词语级情感分类器，把词向量作为特征
            </div>
            <Flow className="ml-[18px] mt-1 h-3 w-[110px]" />
          </div>
          <div className="h-[7px] bg-black" />
          <MeetingTools size="sm" />
          <MiniTask className="h-[9px] pl-2.5 text-[4px] leading-[6px]" box="mr-0.5 size-[3px]" />
          <StatusBar size="sm" words="233" />
        </div>
        <div className="relative flex w-1/2 flex-col border-l border-[#999]">
          <TitleBar size="sm" text="4-NLP_more.md - Typora" className="h-[7px] text-[#555]" />
          <Menu size="sm" />
          <Desk chart className="ml-[7px] mt-0.5 h-[42px] w-[161px]" />
          <Desk className="ml-[7px] mt-1 h-[91px] w-[161px]" />
          <div className="ml-[7px] mt-1 text-[5px] font-bold leading-[7px] text-[#333]">评价方法3：构建情感词典</div>
          <ImeBar size="sm" className="bottom-3 right-0" />
          <div className="mt-auto">
            <StatusBar size="sm" words="130" />
          </div>
        </div>
      </div>
      <Taskbar size="sm" time="18:54" />
    </figure>
  );
}

/* Word-level classifier diagram: word -> vector -> classifier -> verdict. */
function Flow({ className }: { className: string }) {
  const row = (x: number, y: number, word: string, good: boolean) => (
    <g transform={`translate(${x} ${y})`}>
      <text x="12" y="2" textAnchor="end" fontSize="6" fontStyle="italic" fill={good ? "#1fae54" : "#c22"} className="font-['Open_Sans',sans-serif]">
        {word}
      </text>
      <path d="M13 0h8M36 0h8M59 0h7" stroke="#111" strokeWidth=".8" />
      <path d="M20-1.500l3 1.500-3 1.500zM43-1.500l3 1.500-3 1.500zM65-1.500l3 1.500-3 1.500z" />
      <rect x="23" y="-3" width="13" height="6" rx="3" fill="#f3cfae" />
      <path d="M26-2h3v4h-3zM31-2h3v4h-3z" fill="#b5560f" />
      <rect x="47" y="-5.500" width="11" height="11" fill="#fff" stroke="#bbb" strokeWidth=".5" />
      <path d="M52-3h5M53-1h4" stroke="#3aa860" strokeDasharray="1 1" />
      <path d="M48 1h4M48 3h7" stroke="#d44" strokeDasharray="1 1" />
      <path
        d={good ? "M70-1h3v6h-3zM74 5v-6l3-5h2v4h3v1l-1 6z" : "M70-5h3v6h-3zM74-5v6l3 5h2V2h3V1l-1-6z"}
        fill={good ? "#2fb457" : "#d5171b"}
      />
    </g>
  );
  return (
    <svg viewBox="0 0 236 26" className={className}>
      {row(4, 7, "good", true)}
      {row(4, 20, "bad", false)}
      {row(150, 7, "love", true)}
      {row(150, 20, "poor", false)}
    </svg>
  );
}

/* ---------- embedded captures in the note ---------- */

function CaptureTop() {
  return (
    <figure className="flex h-[208px] flex-col overflow-hidden bg-white">
      <div className="flex flex-1">
        <div className="flex w-1/2 flex-col">
          <div className="relative flex h-[105px] flex-col bg-[#fdfdfd]">
            <div className="ml-[71px] flex h-[5px] w-[193px] items-end justify-around overflow-hidden border-b border-[#888] text-[7px] leading-[7px] text-[#333]">
              <span>good (0.97)</span>
              <span>awful (-0.76)</span>
            </div>
            <div className="ml-[30px] mt-[13px] flex items-center gap-[3px] whitespace-nowrap text-[12px] leading-[14px] text-[#111]">
              <span className="size-[9px] border-2 border-[#1784cf]" />情感词典构建可以看作词语级情感分类任务
            </div>
            <div className="ml-[45px] mt-px flex items-center gap-[3px] whitespace-nowrap text-[11px] leading-[14px] text-[#111]">
              <span className="size-2 border-2 border-[#c9682a]" />方法：构建一个词语级情感分类器，把词向量作为特征
            </div>
            <Flow className="ml-[70px] mt-[9px] h-[26px] w-[236px]" />
            <div className="absolute left-1 top-[67px] flex h-[17px] w-[75px] items-center rounded-[1px] bg-[#808284]/90 px-1 text-[6px] text-[#ccc]">
              <span className="size-2.5">
                <Grin />
              </span>
              <span className="ml-1 border-l border-[#aaa] pl-2">说点什么...</span>
              <span className="ml-1 border-l border-[#aaa] pl-1">‹</span>
            </div>
            <div className="mt-auto flex items-center justify-between pb-0.5 pr-7 text-[7px] leading-[10px] text-[#999]">
              <SlideTools className="h-2.5 w-[46px]" />
              <span>17</span>
            </div>
          </div>
          <div className="h-[13px] bg-black" />
          <div className="h-1 bg-[#2d3134]" />
          <MeetingTools size="md" />
          <MiniTask className="h-5 border-t border-[#e5e5e5] pl-[21px] pt-2 text-[9px] leading-[12px]" box="mr-1 size-[7px]" />
          <StatusBar size="md" words="233" />
        </div>
        <div className="relative flex w-1/2 flex-col border-l border-[#999] bg-white pl-4 shadow-[-2px_0_5px_rgba(0,0,0,0.25)]">
          <div className="mr-[22px]">
            <TinyDataset heading />
          </div>
          <div className="mt-2.5 text-[12px] font-bold leading-[16px] text-[#333]">评价方法3：构建情感词典</div>
          <div className="absolute bottom-5 right-0 h-[125px] w-1 bg-[#b5b5b5]" />
          <ImeBar size="md" className="bottom-[30px] right-0" />
          <div className="-ml-4 mt-auto">
            <StatusBar size="md" words="130" />
          </div>
        </div>
      </div>
      <Taskbar size="md" time="18:54" />
    </figure>
  );
}

const lexicons = [
  ["BL-Lex", "2,006", "4,780", "6,786"],
  ["MPQA-Lex", "2,301", "4,150", "6,451"],
  ["NRC-Lex", "2,231", "3,324", "5,555"],
  ["HashtagLex", "32,048", "22,081", "54,129"],
  ["Sentiment140Lex", "38,312", "24,156", "62,468"],
  ["Our Lexicon", "31,591", "33,012", "64,603"],
];

function Brace({ label }: { label: string }) {
  return (
    <div className="flex items-center gap-2 whitespace-nowrap text-[7px]">
      <svg viewBox="0 0 6 30" className="h-[30px] w-1.5">
        <path d="M0 .5h3v29H0M3 15h3" fill="none" stroke="#9cc4dd" />
      </svg>
      {label}
    </div>
  );
}

function CaptureLexicon() {
  return (
    <figure className="flex flex-col overflow-hidden bg-white">
      <div className="flex h-[445px]">
        <div className="flex w-1/2 flex-col">
          <TitleBar size="md" text="readinglist.md - Typora" className="h-[9px] text-[#999]" />
          <div className="h-1.5" />
          <Menu size="md" />
          <div className="ml-4 flex h-3 border-l-2 border-[#dfe2e5] pl-2">
            <a href="https://fanyipdf.com/" className={`text-[9px] leading-[9px] text-[#4183c4] underline ${openSans}`}>
              https://fanyipdf.com/
            </a>
          </div>
          <div className="ml-4 mt-2 text-[15px] font-bold leading-[18px] text-[#333]">教师推荐阅读资料</div>
          <div className="mt-0.5 flex h-[17px] items-center justify-end border-t border-[#ddd] bg-[#fafafa] pr-[45px] text-[7px] text-[#333]">腾讯会议</div>
          <div className="h-8 bg-[#2d3134]" />
          <div className="h-3.5 bg-black" />
          <div className="flex h-[237px] flex-col bg-[#fdfdfd]">
            <div className="mx-[26px] border-b border-[#ccc] pl-1 pt-[13px] text-[19px] font-bold leading-[26px] text-[#843c0c] [text-shadow:1px_1px_1px_rgba(0,0,0,0.25)]">
              <div className="pb-[7px]">评价方法3：构建情感词典</div>
            </div>
            <div className="ml-[30px] mt-[7px] flex items-center gap-0.5 text-[12px] leading-[14px] text-[#111]">
              <span className="size-[9px] border-2 border-[#1784cf]" />情感词典规模
            </div>
            <div className="ml-[44px] mt-[26px] flex gap-1">
              <table className="w-[258px] border-collapse font-['Noto_Sans','Noto_Sans_CJK_SC',sans-serif] text-[7px] leading-[12px] text-[#222]">
                <thead className="bg-[#3b3838] text-white">
                  <tr>
                    <th className="w-[64px] pl-[3px] text-left">情感词典</th>
                    <th>褒义词个数</th>
                    <th>贬义词个数</th>
                    <th>总数</th>
                  </tr>
                </thead>
                <tbody>
                  {lexicons.map((r, n) => (
                    <tr key={r[0]} className={`border-b border-[#bbb] ${n === 5 ? "font-bold" : ""}`}>
                      {r.map((c, i) => (
                        <td key={i} className={i ? "text-center" : "pl-[3px]"}>
                          {c}
                        </td>
                      ))}
                    </tr>
                  ))}
                </tbody>
              </table>
              <div className="flex flex-col gap-2 pt-[17px] text-[#333]">
                <Brace label="人工标注的情感词典" />
                <Brace label="自动构建的情感词典" />
              </div>
            </div>
            <div className="mt-auto flex items-center justify-between pb-0.5 pr-7 text-[7px] leading-[10px] text-[#999]">
              <SlideTools className="h-2.5 w-[46px]" />
              <span>19</span>
            </div>
          </div>
          <div className="h-[13px] bg-black" />
          <div className="flex h-8 items-end bg-[#2d3134]">
            <span className="flex h-3 items-center gap-px bg-[#111] pr-0.5 text-[9px] leading-none text-white">
              <svg viewBox="0 0 28 12" className="h-3 w-7">
                <path d="M0 0h10v12H0z" fill="#ff7a1a" />
                <path d="M2 10c0-3 1-4 3-4s3 1 3 4zM3.500 3.500h3v3h-3z" fill="#fff" />
                <path d="M12 2.500h7v5h-7zM13 9h5v1h-5z" fill="#fff" />
                <path d="M22.500 1.500h3v5h1.500l-3 4-3-4h1.500z" fill="#2fd24f" />
              </svg>
              秦兵的屏幕共享
            </span>
          </div>
          <MiniTask className="flex-1 pl-[21px] pt-2.5 text-[9px] leading-[12px]" box="mr-1 size-[7px]" />
          <StatusBar size="md" words="233" />
        </div>
        <div className="relative flex w-1/2 flex-col border border-[#999] bg-white shadow-[-2px_0_5px_rgba(0,0,0,0.25)]">
          <TitleBar size="md" text="4-NLP_more.md• - Typora" className="h-4 text-[#222]" />
          <Menu size="md" />
          <div className="ml-4 mr-[21px]">
            <TinyDataset />
            <div className="mt-2 flex items-center gap-1.5 pl-1.5 text-[8px] leading-[14px] text-[#444]">
              <span className="size-1 rounded-full bg-[#333]" />评价方法3：构建情感词典
            </div>
            <div className="ml-4 mt-1">
              <TinyLexicon />
              <p className="mt-1 text-[9px] leading-[12px] text-[#444]">自动构建词典</p>
              <p className="mt-1.5 text-[9px] leading-[12px] text-[#444]">情感词典规模</p>
              <div className="mt-1.5 h-3 border-l border-[#555]" />
            </div>
          </div>
          <div className="absolute bottom-4 right-0 h-[106px] w-1 bg-[#b5b5b5]" />
          <ImeBar size="md" className="bottom-[28px] right-0" />
          <div className="mt-auto">
            <StatusBar size="md" words="145" />
          </div>
        </div>
      </div>
      <Taskbar size="md" time="18:55" />
    </figure>
  );
}

/* ---------- main windows ---------- */

function Bullet({ children }: { children: React.ReactNode }) {
  return (
    <li className="flex gap-1.5">
      <span className="mt-1.5 h-5 w-[21px] shrink-0 border-4 border-[#0070c0]" />
      <span className="whitespace-nowrap">{children}</span>
    </li>
  );
}

function LeftWindow() {
  return (
    <section className="flex w-1/2 flex-col bg-white">
      <TitleBar size="lg" text="readinglist.md - Typora" className="h-5 text-[#999]" />
      <div className="h-3" />
      <Menu size="lg" />
      <article className="ml-[38px] mr-[47px] flex h-[95px] shrink-0 flex-col">
        <blockquote className="h-7 border-l-4 border-[#dfe2e5] pl-[19px]">
          <a href="https://fanyipdf.com/" className={`block text-[20px] leading-[23px] text-[#4183c4] underline ${openSans}`}>
            https://fanyipdf.com/
          </a>
        </blockquote>
        <h2 className="mt-[19px] border-b border-[#eee] text-[35px] font-bold leading-[42px] text-[#333]">教师推荐阅读资料</h2>
      </article>

      <div className="flex h-10 shrink-0 justify-end border-t border-[#d8d8d8] bg-[#fafafa] pr-9">
        <div className="flex h-[31px] overflow-hidden rounded-b-[9px] bg-[#33373b] text-[15px] leading-[29px] text-white">
          <span className="px-2.5">您正在观看秦兵的屏幕</span>
          <button aria-label="菜单" className="flex w-[35px] items-center justify-center bg-[#2a2e32]">
            <svg viewBox="0 0 16 14" className="h-3.5 w-4">
              <path d="M1 1.500h13M1 6.500h13M1 12h7" stroke="#fff" strokeWidth="1.200" />
              <path d="M10 9.500h4.500L12.200 13z" fill="#fff" />
            </svg>
          </button>
        </div>
      </div>
      <div className="flex h-[37px] shrink-0 items-center gap-2.5 border-t border-[#dcdcdc] bg-[#f7f9fb] pb-0.5 pl-[3px] pr-2.5">
        <button aria-label="会议信息" className="size-[25px] rounded-sm border border-[#d5d7da] bg-[#eef0f2] p-[3px]">
          <svg viewBox="0 0 16 16" className={svg}>
            <circle cx="8" cy="8" r="8" fill="#5b5e63" />
            <path d="M7 7h2v5.500H7zM7 3.500h2v2H7z" fill="#fff" />
          </svg>
        </button>
        <button aria-label="安全" className="size-[25px] rounded-sm border border-[#d5d7da] bg-[#eef0f2] p-[3px]">
          <svg viewBox="0 0 16 16" className={svg}>
            <path d="M8 0l7 2v7c0 3.500-3 5.500-7 7-4-1.500-7-3.500-7-7V2z" fill="#0a6cff" />
            <path d="M8 5v6M5 8h6" stroke="#fff" strokeWidth="1.500" />
          </svg>
        </button>
        <button aria-label="网络" className="size-[25px] rounded-sm border border-[#d5d7da] bg-[#eef0f2] p-[3px]">
          <svg viewBox="0 0 16 16" className={svg}>
            <path d="M2 15.500V9.500M8 15.500V6M14 15.500V2" stroke="#10c468" strokeWidth="3.700" />
          </svg>
        </button>
        <span className="ml-auto h-[25px] w-[59px] border border-[#cfd0d2] bg-[#eef0f2] text-center text-[15px] leading-[22px] text-[#111]">30:49</span>
      </div>

      <div className="relative">
        <div className="h-[37px] bg-[#2d3134]" />
        <div className="h-[31px] border-b border-[#555] bg-black" />
        <button className="absolute left-[7px] top-4 flex h-[38px] w-[108px] items-center rounded-[3px] bg-[#1e1e1f] pb-0.5 pl-3.5 text-[13px] text-white">
          <svg viewBox="0 0 14 20" className="mr-[11px] h-5 w-3.5">
            <path d="M3 0h8v2l-1 1v6c2 1 3 2 3 4H1c0-2 1-3 3-4V3L3 2zM6.200 13h1.600v7H6.200z" fill="#aaa" />
          </svg>
          锁定画面
        </button>
      </div>

      <div className="relative h-[547px] shrink-0 bg-[#fdfdfd]">
        <div className="mx-[60px] border-b border-[#b2b2b2] pb-5 pl-[7px] pt-[33px]">
          <h1 className="text-[45px] font-black leading-[54px] text-[#843c0c] [text-shadow:1px_2px_2px_rgba(0,0,0,0.35)]">小结</h1>
        </div>
        <ul className="ml-[69px] mt-[15px] flex flex-col gap-[41px] text-[28px] leading-[31px] text-black">
          <Bullet>
            学习面向情感分析的词向量，把词语的上下文信息和情感信息融
            <br />
            入到词向量中
          </Bullet>
          <Bullet>
            在Twitter数据上学习词向量，用表情符自动收集大规模训练数
            <br />据
          </Bullet>
          <Bullet>
            词向量的有效性在三个情感分析的任务中得到验证，分别是查询
            <br />
            相近词语、Twitter情感分类和构建情感词典
          </Bullet>
        </ul>
        <svg viewBox="0 0 9 14" className="absolute left-[445px] top-[288px] h-3.5 w-[9px]">
          <path d="M.5 .5v10.500l2.500-2 2 4.500 1.500-.8-2-4.200H8z" fill="#000" />
        </svg>
        <button aria-label="展开" className="absolute right-0 top-[248px] flex h-[50px] w-[13px] items-center justify-center rounded-l-[4px] bg-[#555]">
          <svg viewBox="0 0 8 16" className="h-4 w-2">
            <path d="M1.500 2l5 6-5 6" fill="none" stroke="#ccc" strokeWidth="1.300" />
          </svg>
        </button>
        <div className="absolute left-2 top-[460px] flex h-[38px] w-[174px] items-center rounded-[3px] bg-[#808284] text-[14px] text-[#cfd0d1]">
          <span className="ml-[11px] size-5">
            <Grin />
          </span>
          <span className="ml-2 h-6 border-l border-[#a5a6a8]" />
          <span className="ml-4">说点什么...</span>
          <span className="ml-auto h-6 border-l border-[#a5a6a8]" />
          <svg viewBox="0 0 8 12" className="ml-2.5 mr-[18px] h-3 w-2">
            <path d="M6.500 1L1.500 6l5 5" fill="none" stroke="#cfd0d1" strokeWidth="1.300" />
          </svg>
        </div>
        <span className="absolute right-[67px] top-[513px] text-[13px] leading-[18px] text-[#888]">21</span>
      </div>

      <div className="h-[31px] shrink-0 bg-black" />
      <div className="h-2.5 shrink-0 bg-[#2d3134]" />
      <MeetingTools size="lg" />
      <label className={`flex flex-1 items-center border-t border-[#d8d8d8] pl-[49px] pt-[21px] text-[20px] leading-[22px] text-[#333] ${openSans}`}>
        <input type="checkbox" className="mr-[11px] size-[15px] appearance-none rounded-[3px] border border-[#767676]" />
        {paper}
      </label>
      <StatusBar size="lg" words="233" />
    </section>
  );
}

function RightWindow() {
  return (
    <section className="relative z-10 flex w-1/2 flex-col border border-[#555] bg-white shadow-[-2px_0_14px_rgba(0,0,0,0.35)]">
      <TitleBar size="lg" text="4-NLP_more.md - Typora" className="h-9 text-black" />
      <div className="h-1" />
      <Menu size="lg" />
      <article className="flex-1 pl-[78px] pr-[51px]">
        <CaptureTop />
        <p className="-ml-[3px] mt-2.5 text-[20px] leading-[30px] text-[#333]">自动构建词典</p>
        <p className="-ml-[3px] mt-3 text-[20px] leading-[30px] text-[#333]">情感词典规模</p>
        <div className="mt-3 flex h-7 items-center whitespace-nowrap pl-0.5 font-['DejaVu_Sans_Mono',monospace] text-[18px] leading-[28px] text-[#333]">
          <svg viewBox="0 0 18 16" className="mr-[3px] h-4 w-[18px] shrink-0">
            <path d="M0 0h18v16H0z" fill="#222" />
            <path d="M1.500 1.500h15v11l-5-6-4 4-2-2-4 4z" fill="#fff" />
            <circle cx="5" cy="4.500" r="1.500" fill="#222" />
          </svg>
          <span>![image-20211220185508283](4-NLP_</span>
          <span className="underline decoration-[#e33] decoration-wavy decoration-1 underline-offset-2">more.assets</span>
          <span className="border-r border-black leading-[20px]">/image-20211220185508283.png)</span>
        </div>
        <div className="h-1" />
        <CaptureLexicon />
      </article>
      <div className="absolute bottom-9 right-0 h-[212px] w-[9px] bg-[#b0b0b0]" />
      <ImeBar size="lg" className="-right-px bottom-[67px]" />
      <StatusBar size="lg" words="148" />
    </section>
  );
}

export default function App() {
  return (
    <div className="flex min-h-screen w-full flex-col overflow-hidden bg-white font-['Noto_Sans_CJK_SC',sans-serif]">
      <main className="flex flex-1">
        <LeftWindow />
        <RightWindow />
      </main>
      <Taskbar size="lg" time="18:55" />
    </div>
  );
}
